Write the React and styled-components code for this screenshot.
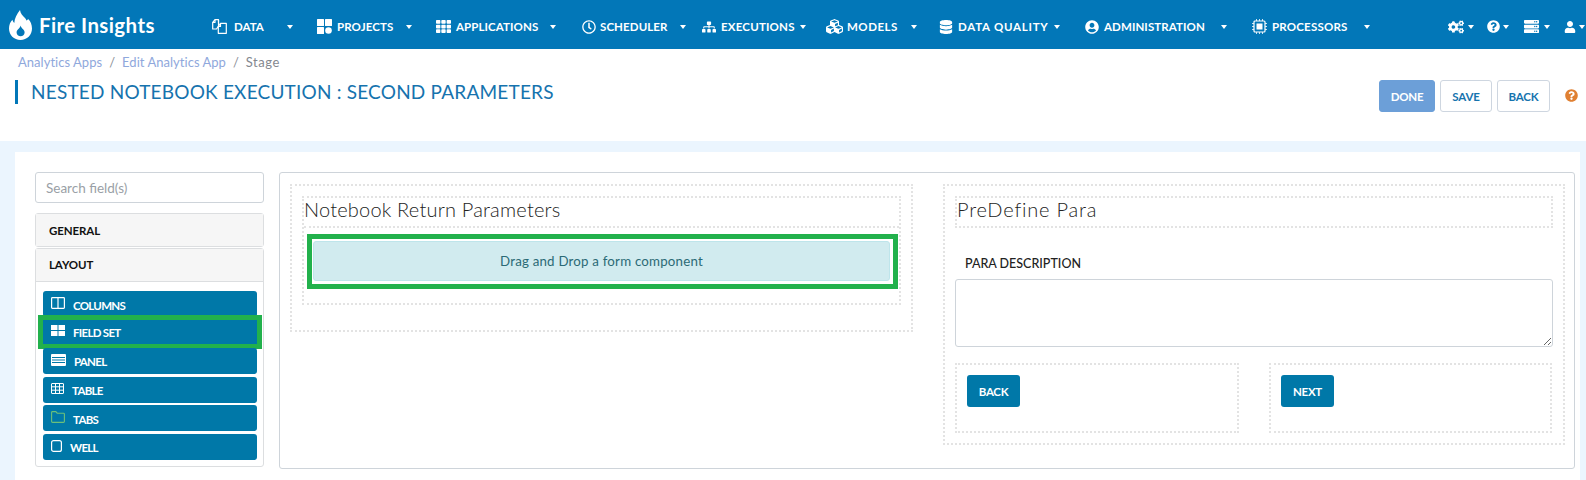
import React from "react";
import styled, { createGlobalStyle } from "styled-components";
import {
  FaTh, FaRegClock, FaSitemap, FaCubes, FaDatabase, FaUserCircle, FaCogs,
  FaQuestionCircle, FaServer, FaUser,
} from "react-icons/fa";

const Global = createGlobalStyle`
  * { box-sizing: border-box; }
  html, body { margin: 0; padding: 0; height: 480px; overflow: hidden; background: #ebf5fe; }
  body { font-family: "Lato", "Liberation Sans", sans-serif; color: #222; }
`;

const Header = styled.header`
  display: flex; align-items: center; height: 49px; background: #0277b8; color: #fff;
`;
const Logo = styled.div`
  display: flex; align-items: center; gap: 7px; width: 212px; padding-left: 9px; flex: none;
  font-size: 20.5px; font-weight: 700; letter-spacing: 0.4px;
`;
const Nav = styled.nav`display: flex; align-items: center; flex: 1; padding-top: 4px;`;
const NavItem = styled.div`
  display: flex; align-items: center; width: ${p => p.$w}px; flex: none; font-size: 11.5px; font-weight: 700;
  letter-spacing: ${p => p.$ls}px; white-space: nowrap;
  svg { flex: none; }
`;
const NavIconSlot = styled.span`display: flex; width: ${p => p.$w}px; flex: none;`;
const NavLabel = styled.span`display: block; width: ${p => p.$w}px; flex: none;`;
const Caret = styled.i`
  flex: none; width: 0; height: 0; border-left: 3.500px solid transparent; border-right: 3.500px solid transparent;
  border-top: 4px solid #fff;
`;
const Tools = styled.div`display: flex; align-items: center; margin-left: auto; padding: 4px 1px 0 0;`;
const Tool = styled.div`display: flex; align-items: center; gap: ${p => p.$gap}px; margin-left: ${p => p.$ml}px;`;

const SubHeader = styled.section`
  display: flex; justify-content: space-between; height: 92px; background: #fff; padding: 0 8px 0 15px;
`;
const Breadcrumbs = styled.div`
  display: flex; gap: 7px; padding: 5px 0 0 3px; font-size: 13px; line-height: 16px; color: #8fa8dc; letter-spacing: 0.03px;
`;
const Sep = styled.span`color: #8a8f98;`;
const Current = styled.span`color: #84888f; letter-spacing: 0.5px;`;
const Title = styled.h1`
  margin: 10px 0 0; height: 24px; border-left: 3px solid #0277b8; padding-left: 13px;
  font-size: 19px; line-height: 24px; font-weight: 400; color: #1673ae; letter-spacing: 0.2px; white-space: nowrap;
`;
const Actions = styled.div`display: flex; align-items: flex-start; gap: 5px; padding-top: 31px;`;
const ActionButton = styled.button`
  height: 32px; width: ${p => p.$w}px; border-radius: 3px; font: 700 11.5px "Lato", sans-serif; padding: 0; letter-spacing: -0.2px;
  background: ${p => (p.$primary ? "#6c9fd8" : "#fff")}; color: ${p => (p.$primary ? "#fff" : "#1673ae")};
  border: 1px solid ${p => (p.$primary ? "#6c9fd8" : "#ced6e0")};
`;
const HelpIcon = styled.span`display: flex; margin: 9px 0 0 10px; color: #e08032; font-size: 13px;`;

const Card = styled.main`
  display: flex; gap: 15px; height: 340px; margin: 11px 6px 0 15px; padding: 20px 5px 0 20px; background: #fff;
`;
const Sidebar = styled.aside`display: flex; flex-direction: column; width: 229px; flex: none;`;
const Search = styled.input`
  height: 31px; border: 1px solid #ced4da; border-radius: 3px; padding: 0 10px; margin-bottom: 10px;
  font: 13.500px "Lato", sans-serif; outline: none;
  &::placeholder { color: #9a9fa6; opacity: 1; }
`;
const Accordion = styled.div`
  border: 1px solid #dcdee0; border-radius: 3px; margin-top: ${p => p.$mt || 0}px; height: ${p => p.$h}px; background: #fff;
`;
const AccordionHead = styled.div`
  display: flex; align-items: center; height: ${p => p.$h}px; padding: 0 0 ${p => p.$pb || 0}px 13px; background: #f6f6f6;
  font-size: 11.5px; font-weight: 700; color: #111; letter-spacing: -0.1px; border-bottom: ${p => (p.$line ? "1px solid #dcdee0" : "0")};
`;
const FieldList = styled.div`display: flex; flex-direction: column; gap: 2.6px; padding: 9px 6px 0 7px;`;
const FieldButton = styled.div`
  display: flex; align-items: center; gap: 8px; height: ${p => (p.$hl ? 24 : 26)}px; padding-left: 8px;
  background: #0078a8; border-radius: 3px; color: #fff; font-size: 11.5px; font-weight: 700; letter-spacing: -0.7px;
  ${p => p.$hl && "outline: 5px solid #22b14c; margin-bottom: 1.8px; border-radius: 0;"}
  svg { flex: none; margin-top: -2px; }
  span { padding-top: 2px; }
`;

const Panel = styled.section`
  display: grid; grid-template-columns: 623px 622px; gap: 30px; align-items: start; flex: 1; height: 297px;
  padding: 11px 10px; border: 1px solid #ced4da; border-radius: 3px; min-width: 0;
`;
const Dotted = styled.div`border: 2px dotted #e3e3e3;`;
const Outer = styled(Dotted)`height: ${p => p.$h}px; padding: 10px;`;
const Inner = styled(Dotted)`height: 109px;`;
const BoxTitle = styled.h2`
  margin: 0; height: 30px; font-size: 20px; line-height: 23px; font-weight: 300; color: #222;
  letter-spacing: ${p => p.$ls}px; white-space: nowrap;
`;
const InnerTitle = styled(BoxTitle)`border-bottom: 2px dotted #e3e3e3;`;
const DropFrame = styled.div`
  height: 55px; margin: 6px 1px 0 3px; padding: 2px 3px 3px 1px; border: 5px solid #22b14c;
`;
const DropAlert = styled.div`
  display: flex; align-items: center; justify-content: center; height: 40px; background: #d1ebef;
  border: 1px solid #bee5eb; border-radius: 3px; color: #2b6a76; font-size: 13.3px; letter-spacing: 0.2px;
`;
const TitleBox = styled(Dotted)`height: 32px;`;
const FieldLabel = styled.label`
  display: block; margin: 28px 0 0 10px; height: 16px; line-height: 16px; font-size: 12.5px; font-weight: 500; color: #222;
`;
const TextArea = styled.textarea`
  display: block; width: 598px; height: 68px; margin-top: 7px; border: 1px solid #ced4da; border-radius: 3px; outline: none;
`;
const ButtonRow = styled.div`display: grid; grid-template-columns: 284px 283px; gap: 30px; margin-top: 16px;`;
const Cell = styled(Dotted)`height: 70px; padding: 10px;`;
const StepButton = styled.button`
  width: 53px; height: 32px; padding: 0; background: #0078a8; border: 0; border-radius: 3px; color: #fff;
  font: 700 11.5px "Lato", sans-serif; letter-spacing: -0.3px;
`;

const FlameLogo = () => (
  <svg width="23" height="30" viewBox="0 0 23 30" fill="#fff">
    <path fillRule="evenodd" d="M11 0c.5 3.500 2.500 5.500 5 8 .8.900 1.200 1.800 1.400 2.600.7-.4 1.300-1 1.700-1.700C21.500 11 23 14.500 23 18.500 23 25 18 30 11.500 30S0 25 0 18.500c0-3.500 1.300-6.500 3.500-8.700.2 1.400.8 2.500 1.800 3.200C5.500 8 8 4 11 0Zm.6 15.500c-.2 1.600-1.400 2.600-2.500 3.700-.9.900-1.500 2-1.500 3.200 0 2.100 1.800 3.800 4 3.800s4-1.700 4-3.800c0-1.200-.6-2.300-1.500-3.200-1.100-1.100-2.300-2.100-2.500-3.700Z" />
  </svg>
);
const CopyIcon = () => (
  <svg width="15" height="15" viewBox="0 0 15 15" fill="none" stroke="#fff" strokeWidth="1.200" strokeLinejoin="round">
    <path d="M3 .7h3.500v6.500L4.500 10H.7V3.500Z" />
    <path d="M8.500 4.300H14.300v10H6.300V7.500Z" />
    <path d="M6.500 1v2.800M3 .7v2.800H.7M8.500 4.300v3.200H6.300" />
  </svg>
);
const ProjectsIcon = () => (
  <svg width="15" height="15" viewBox="0 0 15 15" fill="#fff">
    <rect x="0" y="0" width="7" height="7" rx=".5" /><rect x="8" y="0" width="7" height="7" rx=".5" />
    <rect x="0" y="8" width="7" height="7" rx=".5" /><circle cx="11.500" cy="11.500" r="3.300" />
  </svg>
);
const ChipIcon = () => (
  <svg width="15" height="15" viewBox="0 0 15 15" fill="none" stroke="#fff">
    <rect x="2" y="2" width="11" height="11" rx="1" strokeWidth="1.200" />
    <rect x="4.500" y="4.500" width="6" height="6" fill="#fff" stroke="none" />
    <path strokeWidth=".8" d="M4.500 0v2M7.500 0v2M10.500 0v2M4.500 13v2M7.500 13v2M10.500 13v2M0 4.500h2M0 7.500h2M0 10.500h2M13 4.500h2M13 7.500h2M13 10.500h2" />
  </svg>
);
const ColumnsIcon = () => (
  <svg width="14" height="12" viewBox="0 0 14 12" fill="none" stroke="#fff" strokeWidth="1.200">
    <rect x=".6" y=".6" width="12.800" height="10.800" rx=".8" /><path d="M7 .6v10.800" />
  </svg>
);
const FieldSetIcon = () => (
  <svg width="14" height="11" viewBox="0 0 14 11" fill="#fff">
    <rect width="6.500" height="5" /><rect x="7.500" width="6.500" height="5" />
    <rect y="6" width="6.500" height="5" /><rect x="7.500" y="6" width="6.500" height="5" />
  </svg>
);
const PanelIcon = () => (
  <svg width="15" height="12" viewBox="0 0 15 12" fill="#fff">
    <path d="M1 0h13a1 1 0 0 1 1 1v10a1 1 0 0 1-1 1H1a1 1 0 0 1-1-1V1a1 1 0 0 1 1-1Zm0 3v1h13V3Zm0 2.500v1h13v-1ZM1 8v1h13V8Z" fillRule="evenodd" />
  </svg>
);
const TableIcon = () => (
  <svg width="13" height="11" viewBox="0 0 13 11" fill="none" stroke="#fff">
    <rect x=".5" y=".5" width="12" height="10" rx=".5" /><path d="M.5 3.800h12M.5 7.200h12M4.500.5v10M8.500.5v10" />
  </svg>
);
const FolderIcon = () => (
  <svg width="14" height="12" viewBox="0 0 14 12" fill="none" stroke="#6cc07a" strokeWidth="1.100">
    <path d="M.6 1.500c0-.5.400-.9.900-.9h3.300l1.400 1.600h6.300c.5 0 .9.400.9.900v7.400c0 .5-.4.900-.9.900H1.500a.9.900 0 0 1-.9-.9Z" />
  </svg>
);
const WellIcon = () => (
  <svg width="11" height="12" viewBox="0 0 11 12" fill="none" stroke="#fff" strokeWidth="1.200">
    <rect x=".6" y=".6" width="9.800" height="10.800" rx="2" />
  </svg>
);

const navItems = [
  { label: "DATA", Icon: CopyIcon, w: 105, before: 22, text: 53, ls: 0 },
  { label: "PROJECTS", Icon: ProjectsIcon, w: 119, before: 20, text: 69, ls: 0.1 },
  { label: "APPLICATIONS", Icon: FaTh, size: 15, w: 146, before: 20, text: 94, ls: 0.1 },
  { label: "SCHEDULER", Icon: FaRegClock, size: 14, w: 120, before: 18, text: 80, ls: 0.1 },
  { label: "EXECUTIONS", Icon: FaSitemap, size: 14, w: 124, before: 19, text: 79, ls: 0.2 },
  { label: "MODELS", Icon: FaCubes, size: 17, w: 113, before: 21, text: 64, ls: 0.5 },
  { label: "DATA QUALITY", Icon: FaDatabase, size: 14, w: 146, before: 19, text: 96, ls: 0.75 },
  { label: "ADMINISTRATION", Icon: FaUserCircle, size: 14, w: 167, before: 19, text: 117, ls: 0.1 },
  { label: "PROCESSORS", Icon: ChipIcon, w: 180, before: 20, text: 92, ls: 0.2 },
];

const fieldItems = [
  { label: "COLUMNS", icon: <ColumnsIcon /> },
  { label: "FIELD SET", icon: <FieldSetIcon />, hl: true },
  { label: "PANEL", icon: <PanelIcon /> },
  { label: "TABLE", icon: <TableIcon /> },
  { label: "TABS", icon: <FolderIcon /> },
  { label: "WELL", icon: <WellIcon /> },
];

export default function App() {
  return (
    <>
      <Global />
      <Header>
        <Logo><FlameLogo />Fire Insights</Logo>
        <Nav>
          {navItems.map(({ label, Icon, size, w, before, text, ls }) => (
            <NavItem key={label} $w={w} $ls={ls}>
              <NavIconSlot $w={before}><Icon size={size} /></NavIconSlot>
              <NavLabel $w={text}>{label}</NavLabel>
              <Caret />
            </NavItem>
          ))}
        </Nav>
        <Tools>
          <Tool $gap={4} $ml={0}><FaCogs size={16} /><Caret /></Tool>
          <Tool $gap={3} $ml={13}><FaQuestionCircle size={13} /><Caret /></Tool>
          <Tool $gap={5} $ml={15}><FaServer size={15} /><Caret /></Tool>
          <Tool $gap={3} $ml={14}><FaUser size={12} /><Caret /></Tool>
        </Tools>
      </Header>
      <SubHeader>
        <div>
          <Breadcrumbs>
            <span>Analytics Apps</span><Sep>/</Sep><span>Edit Analytics App</span><Sep>/</Sep><Current>Stage</Current>
          </Breadcrumbs>
          <Title>NESTED NOTEBOOK EXECUTION : SECOND PARAMETERS</Title>
        </div>
        <Actions>
          <ActionButton $primary $w={56}>DONE</ActionButton>
          <ActionButton $w={52}>SAVE</ActionButton>
          <ActionButton $w={53}>BACK</ActionButton>
          <HelpIcon><FaQuestionCircle /></HelpIcon>
        </Actions>
      </SubHeader>
      <Card>
        <Sidebar>
          <Search placeholder="Search field(s)" readOnly />
          <Accordion $h={34}><AccordionHead $h={32}>GENERAL</AccordionHead></Accordion>
          <Accordion $mt={1} $h={219}>
            <AccordionHead $h={33} $pb={2} $line>LAYOUT</AccordionHead>
            <FieldList>
              {fieldItems.map(f => (
                <FieldButton key={f.label} $hl={f.hl}>{f.icon}<span>{f.label}</span></FieldButton>
              ))}
            </FieldList>
          </Accordion>
        </Sidebar>
        <Panel>
          <Outer $h={148}>
            <Inner>
              <InnerTitle $ls={0.2}>Notebook Return Parameters</InnerTitle>
              <DropFrame><DropAlert>Drag and Drop a form component</DropAlert></DropFrame>
            </Inner>
          </Outer>
          <Outer $h={261}>
            <TitleBox><BoxTitle $ls={0.8}>PreDefine Para</BoxTitle></TitleBox>
            <FieldLabel>PARA DESCRIPTION</FieldLabel>
            <TextArea readOnly />
            <ButtonRow>
              <Cell><StepButton>BACK</StepButton></Cell>
              <Cell><StepButton>NEXT</StepButton></Cell>
            </ButtonRow>
          </Outer>
        </Panel>
      </Card>
    </>
  );
}
